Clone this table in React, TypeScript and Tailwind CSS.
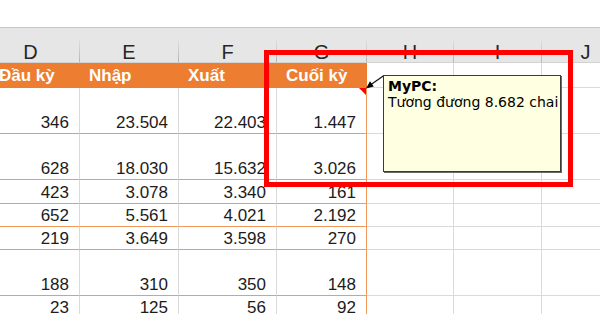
import React from "react";

type Col = { k: string; w: string; table: boolean; last?: boolean };

const cols: Col[] = [
  { k: "D", w: "w-[98px]", table: true },
  { k: "E", w: "w-[99px]", table: true },
  { k: "F", w: "w-[98px]", table: true },
  { k: "G", w: "w-[90px]", table: true, last: true },
  { k: "H", w: "w-[87px]", table: false },
  { k: "I", w: "w-[88px]", table: false },
  { k: "J", w: "w-[88px]", table: false },
];

const heads = ["Đầu kỳ", "Nhập", "Xuất", "Cuối kỳ"];

const rows: { h: string; v: string[] }[] = [
  { h: "h-[46px]", v: ["346", "23.504", "22.403", "1.447"] },
  { h: "h-[46px]", v: ["628", "18.030", "15.632", "3.026"] },
  { h: "h-[24px]", v: ["423", "3.078", "3.340", "161"] },
  { h: "h-[23px]", v: ["652", "5.561", "4.021", "2.192"] },
  { h: "h-[23px]", v: ["219", "3.649", "3.598", "270"] },
  { h: "h-[46px]", v: ["188", "310", "350", "148"] },
  { h: "h-[23px]", v: ["23", "125", "56", "92"] },
];

export default function App() {
  return (
    <div
      className="relative w-[600px] h-[314px] overflow-hidden bg-white"
      style={{ fontFamily: '"Liberation Sans", Arial, sans-serif' }}
    >
      {/* top white band */}
      <div className="h-[28px] border-b border-[#c6c6c6] bg-white" />

      {/* column letters */}
      <div className="flex ml-[-18px] h-[35px] bg-[#e6e6e6] border-b border-[#d2d2d2]">
        {cols.map((c) => (
          <div key={c.k} className={`${c.w} shrink-0 flex items-end`}>
            <div className="flex-1 text-center text-[20px] leading-[20px] text-[#262626]">
              {c.k}
            </div>
            <div className="w-px h-[22px] bg-gradient-to-b from-[#e0e0e0] to-[#b4b4b4]" />
          </div>
        ))}
      </div>

      {/* orange header row */}
      <div className="flex ml-[-18px] h-[25px]">
        {cols.map((c, i) =>
          c.table ? (
            <div
              key={c.k}
              className={`${c.w} shrink-0 bg-[#ed7d31] flex items-center text-white font-bold text-[17px] leading-[20px] ${
                i === 0 ? "pl-[17px]" : "pl-[9px]"
              }`}
            >
              {heads[i]}
            </div>
          ) : (
            <div
              key={c.k}
              className={`${c.w} shrink-0 border-b border-r border-[#dadada]`}
            />
          )
        )}
      </div>

      {/* data rows */}
      {rows.map((r, ri) => (
        <div key={ri} className={`flex ml-[-18px] ${r.h}`}>
          {cols.map((c, i) =>
            c.table ? (
              <div
                key={c.k}
                className={`${c.w} shrink-0 border-b border-b-[#f19a5c] border-r ${
                  c.last ? "border-r-[#f19a5c]" : "border-r-[#d9d9d9]"
                } flex items-end justify-end pr-[10px] pb-[2px] text-[17px] leading-[17px] text-[#1c1c1c]`}
              >
                {r.v[i]}
              </div>
            ) : (
              <div
                key={c.k}
                className={`${c.w} shrink-0 border-b border-r border-[#dadada]`}
              />
            )
          )}
        </div>
      ))}

      {/* comment indicator */}
      <div className="absolute left-[359px] top-[88px] w-0 h-0 border-t-[7px] border-t-[#ff0000] border-l-[7px] border-l-transparent" />

      {/* comment arrow */}
      <svg
        className="absolute left-[360px] top-[70px]"
        width="30"
        height="24"
        viewBox="0 0 30 24"
      >
        <line x1="24" y1="5.5" x2="11" y2="14.5" stroke="#111" strokeWidth="1.2" />
        <polygon points="6,18.5 13.8,16.6 10,11.2" fill="#000" />
      </svg>

      {/* comment box */}
      <div
        className="absolute left-[383px] top-[75px] w-[178px] h-[97px] bg-[#ffffe1] border border-[#3a3a3a] shadow-[1px_1px_0_#6a6a6a] pl-[4px] pt-[2px] text-[14px] leading-[16px] text-black"
        style={{ fontFamily: '"DejaVu Sans", Verdana, sans-serif' }}
      >
        <div className="font-bold">MyPC:</div>
        <div className="whitespace-nowrap">Tương đương 8.682 chai</div>
      </div>

      {/* red highlight rectangle */}
      <div className="absolute left-[264px] top-[50px] w-[309px] h-[137px] border-[5px] border-[#ff0000]" />
    </div>
  );
}
